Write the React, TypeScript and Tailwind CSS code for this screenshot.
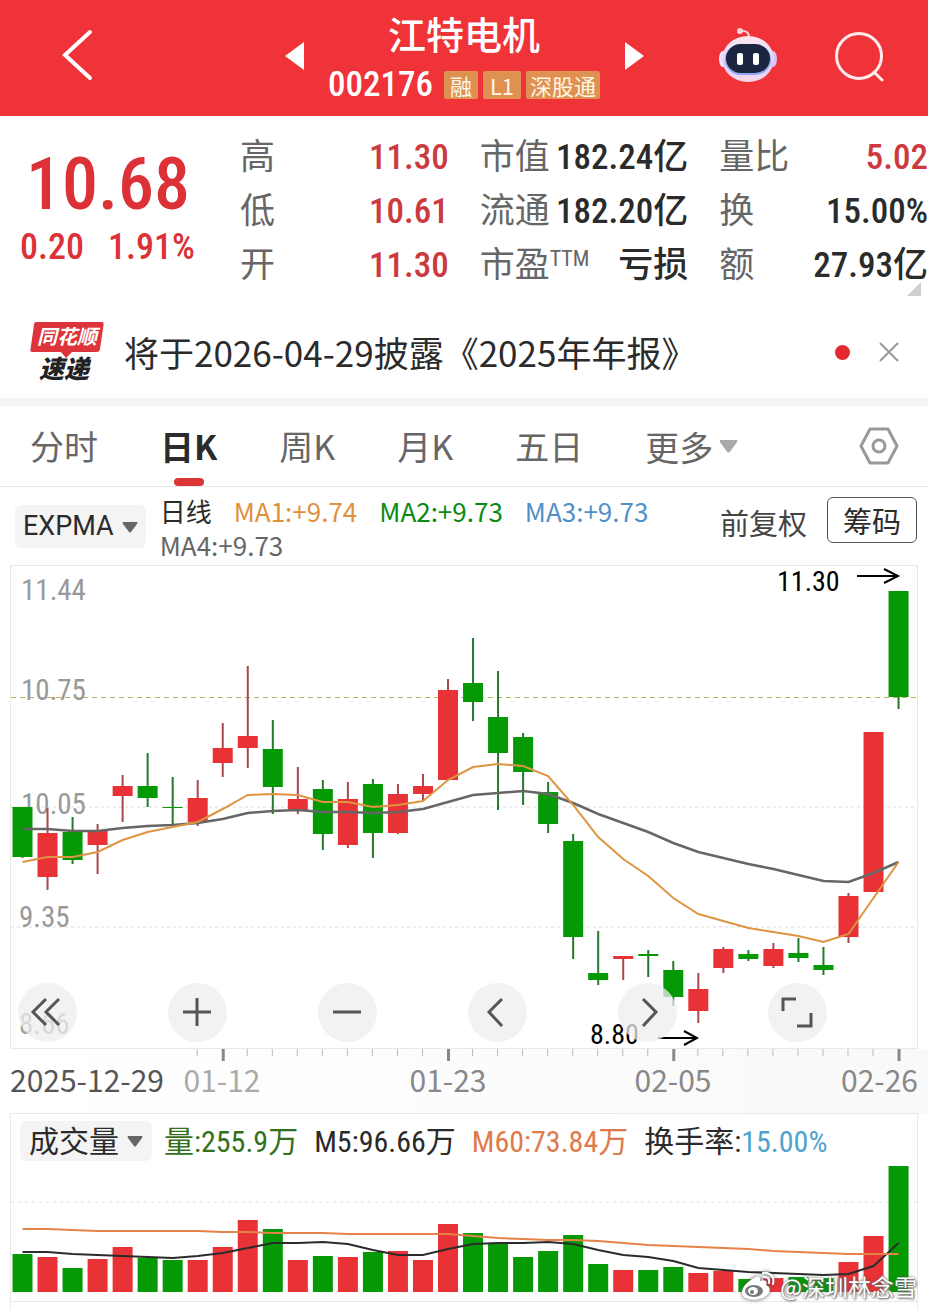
import { useState } from 'react'
import { clsx } from 'clsx'

// x step between two trading days
const STEP = 25.03
const FIRST_X = 22.5

const xOf = (i: number) => FIRST_X + STEP * i

// body top, body bottom, high, low, direction
type Candle = [number, number, number, number, 'up' | 'down']

const candles: Candle[] = [
  [807, 857, 807, 858, 'down'],
  [833, 877, 808, 890, 'up'],
  [832, 860, 817, 864, 'down'],
  [831, 845, 824, 874, 'up'],
  [786, 796, 775, 822, 'up'],
  [786, 798, 753, 807, 'down'],
  [807, 808, 777, 824, 'down'],
  [798, 822, 780, 826, 'up'],
  [748, 763, 723, 777, 'up'],
  [736, 748, 666, 768, 'up'],
  [749, 787, 720, 814, 'down'],
  [799, 810, 767, 814, 'up'],
  [789, 834, 780, 850, 'down'],
  [799, 845, 782, 848, 'up'],
  [784, 833, 779, 858, 'down'],
  [794, 833, 784, 834, 'up'],
  [786, 794, 774, 800, 'up'],
  [690, 780, 679, 780, 'up'],
  [683, 702, 638, 721, 'down'],
  [717, 753, 671, 810, 'down'],
  [737, 772, 733, 805, 'down'],
  [792, 824, 782, 833, 'down'],
  [841, 937, 834, 959, 'down'],
  [973, 980, 931, 985, 'down'],
  [956, 959, 956, 980, 'up'],
  [954, 956, 950, 977, 'down'],
  [970, 997, 961, 1006, 'down'],
  [989, 1011, 973, 1023, 'up'],
  [949, 968, 947, 973, 'up'],
  [954, 959, 950, 961, 'down'],
  [949, 966, 943, 968, 'up'],
  [953, 958, 938, 962, 'down'],
  [965, 970, 947, 975, 'down'],
  [896, 937, 893, 943, 'up'],
  [732, 892, 732, 892, 'up'],
  [591, 697, 591, 709, 'down'],
]

const fastLine = [
  862, 857, 857, 852, 840, 832, 827, 822, 809, 795, 794, 795, 802, 802, 807, 805, 801, 780,
  767, 764, 766, 776, 805, 837, 859, 876, 898, 914, 921, 928, 932, 936, 942, 934, 898, 862,
]
const slowLine = [
  829, 829, 831, 831, 828, 826, 825, 823, 819, 813, 811, 810, 812, 812, 813, 812, 809, 802,
  795, 793, 791, 794, 803, 814, 823, 832, 843, 852, 858, 864, 869, 875, 881, 882, 873, 862,
]

const volumes = [
  1254, 1257, 1268, 1259, 1247, 1258, 1260, 1260, 1247, 1220, 1229, 1260, 1256, 1257, 1252,
  1251, 1260, 1224, 1233, 1244, 1257, 1251, 1235, 1264, 1270, 1270, 1267, 1273, 1271, 1279,
  1278, 1277, 1278, 1262, 1236, 1166,
]
const volumeM5 = [
  1252, 1252, 1254, 1255, 1256, 1257, 1258, 1256, 1253, 1248, 1243, 1243, 1242, 1244, 1250,
  1255, 1255, 1249, 1244, 1243, 1243, 1242, 1244, 1250, 1255, 1257, 1261, 1268, 1270, 1272,
  1273, 1274, 1275, 1274, 1266, 1243,
]
const volumeM60 = [
  1229, 1229, 1230, 1231, 1231, 1231, 1231, 1231, 1232, 1232, 1233, 1233, 1233, 1234, 1234,
  1234, 1234, 1234, 1236, 1238, 1239, 1240, 1240, 1241, 1243, 1245, 1246, 1247, 1248, 1249,
  1251, 1252, 1253, 1254, 1254, 1254,
]

const points = (ys: number[]) => ys.map((y, i) => `${xOf(i)},${y}`).join(' ')

const priceLabels = [
  { text: '11.44', x: 21, y: 600 },
  { text: '10.75', x: 21, y: 700 },
  { text: '10.05', x: 21, y: 814 },
  { text: '9.35', x: 19, y: 927 },
  { text: '8.66', x: 19, y: 1034 },
]

const stats = [
  [
    { label: '高', value: '11.30', red: true },
    { label: '低', value: '10.61', red: true },
    { label: '开', value: '11.30', red: true },
  ],
  [
    { label: '市值', value: '182.24亿' },
    { label: '流通', value: '182.20亿' },
    { label: '市盈', sup: 'TTM', value: '亏损' },
  ],
  [
    { label: '量比', value: '5.02', red: true },
    { label: '换', value: '15.00%' },
    { label: '额', value: '27.93亿' },
  ],
]

const tabs = ['分时', '日K', '周K', '月K', '五日']

const chartButtons = [
  { label: '最早', d: 'M28 16L15 29L28 42M41 16L28 29L41 42' },
  { label: '放大', d: 'M29 15V43M15 29H43' },
  { label: '缩小', d: 'M15 29H43' },
  { label: '左移', d: 'M34 16L21 29L34 43' },
  { label: '右移', d: 'M25 16L38 29L25 43' },
  { label: '全屏', d: 'M15 28V16H28M43 30V43H29' },
]

const Caret = ({ className }: { className?: string }) => (
  <svg viewBox="0 0 16 12" className={className} fill="currentColor" aria-hidden="true">
    <path d="M1 1H15Q16 1 15 3L9 11Q8 12 7 11L1 3Q0 1 1 1Z" />
  </svg>
)

const Robot = () => (
  <svg viewBox="0 0 60 56" className="h-14 w-[60px]" aria-hidden="true">
    <defs>
      <linearGradient id="shell" x1="0" y1="0" x2="0" y2="1">
        <stop offset="0" stopColor="#ffe9f0" />
        <stop offset="0.6" stopColor="#d9d0fa" />
        <stop offset="1" stopColor="#f7d9ea" />
      </linearGradient>
    </defs>
    <path d="M22 3Q31 2 31 9" fill="none" stroke="#ffd3dc" strokeWidth="2" />
    <circle cx="22" cy="3" r="3" fill="#ffd3dc" />
    <ellipse cx="5" cy="31" rx="4" ry="8" fill="#f3e4fb" />
    <ellipse cx="55" cy="31" rx="4" ry="8" fill="#d5c3f6" />
    <ellipse cx="30" cy="31" rx="26" ry="23" fill="url(#shell)" />
    <rect x="7" y="16" width="46" height="31" rx="16" fill="#8fa5ef" />
    <rect x="8" y="16" width="44" height="29" rx="15" fill="#1b2540" />
    <rect x="19" y="25" width="6" height="12" rx="2" fill="#fff" />
    <rect x="35" y="25" width="6" height="12" rx="2" fill="#fff" />
  </svg>
)

const Header = () => (
  <header className="grid h-[116px] grid-cols-[1fr_359px_1fr] items-center bg-[#f03239] pb-1 text-white">
    <div className="pl-[60px]">
      <button type="button" aria-label="返回" className="block">
        <svg viewBox="0 0 34 54" className="h-[54px] w-[34px]" fill="none" stroke="currentColor" strokeWidth="4" strokeLinecap="round">
          <path d="M30 3L5 26L30 49" />
        </svg>
      </button>
    </div>
    <div className="flex items-center justify-between">
      <button type="button" aria-label="上一只">
        <svg viewBox="0 0 20 28" className="h-7 w-5" fill="currentColor"><path d="M19 0V28L0 14Z" /></svg>
      </button>
      <div className="flex flex-col items-center pt-1">
        <h1 className="text-[38px] leading-[48px] font-medium">江特电机</h1>
        <div className="flex items-center gap-[5px] pt-[6px]">
          <span className="pr-[6px] font-['Roboto_Condensed','Roboto',sans-serif] text-[35px] leading-[44px] font-medium">002176</span>
          <span className="rounded-xs bg-[#de9150] px-[6px] text-[22px] leading-7 text-[#fff6e6]">融</span>
          <span className="rounded-xs bg-[#de9150] px-[7px] text-[22px] leading-7 text-[#fff6e6]">L1</span>
          <span className="rounded-xs bg-[#de9150] px-1 text-[22px] leading-7 text-[#fff6e6]">深股通</span>
        </div>
      </div>
      <button type="button" aria-label="下一只">
        <svg viewBox="0 0 20 28" className="h-7 w-5" fill="currentColor"><path d="M1 0V28L20 14Z" /></svg>
      </button>
    </div>
    <div className="flex items-center justify-end gap-14 pr-[42px]">
      <button type="button" aria-label="智能助手"><Robot /></button>
      <button type="button" aria-label="搜索">
        <svg viewBox="0 0 52 52" className="size-[52px]" fill="none" stroke="#ffeceb" strokeWidth="3" strokeLinecap="round">
          <circle cx="25" cy="26" r="22.5" />
          <path d="M40 42L48 50" />
        </svg>
      </button>
    </div>
  </header>
)

const Quote = () => (
  <section className="relative flex pt-[15px] pb-[13px] font-['Roboto_Condensed','Roboto','Noto_Sans_CJK_SC',sans-serif]">
    <div className="flex w-[240px] flex-col pt-[18px] text-[#dc3237]">
      <div className="pl-[26px] text-[72px] leading-[72px] font-medium">10.68</div>
      <div className="flex gap-6 pt-1 pl-5 text-[36px] leading-[44px] font-medium">
        <span>0.20</span>
        <span>1.91%</span>
      </div>
    </div>
    <div className="grid flex-1 grid-cols-3 gap-x-[31px]">
      {stats.map((column, i) => (
        <dl key={i}>
          {column.map((item) => (
            <div key={item.label} className="flex h-[54px] items-center justify-between whitespace-nowrap">
              <dt className="flex text-[35px] leading-[54px] text-[#666]">
                {item.label}
                {'sup' in item && <span className="text-[22px] leading-10">{item.sup}</span>}
              </dt>
              <dd className={clsx('text-[35px] leading-[54px] font-medium', 'red' in item ? 'text-[#cc3a3f]' : 'text-[#2b2b2b]')}>
                {item.value}
              </dd>
            </div>
          ))}
        </dl>
      ))}
    </div>
    <svg viewBox="0 0 14 14" className="absolute right-[7px] bottom-[10px] size-[14px]" fill="#cfcfcf"><path d="M14 0V14H0Z" /></svg>
  </section>
)

const Notice = () => (
  <section className="flex h-[92px] items-center pr-[28px] pl-[30px]">
    <svg viewBox="0 0 74 66" className="h-[66px] w-[74px]" aria-label="同花顺速递">
      <path d="M6 3H72Q74 3 73.500 6L70 30Q69.500 33 67 33H42L36 39L31 33H2Q0 33 0.500 30L4 6Q4 3 6 3Z" fill="#dc343a" />
      <text x="7" y="25" fontSize="20" fontWeight="700" fontStyle="italic" fill="#fff">同花顺</text>
      <text x="9" y="59" fontSize="25" fontWeight="900" fontStyle="italic" fill="#222">速递</text>
    </svg>
    <a href="#report" className="ml-5 flex-1 text-[35px] leading-[48px] whitespace-nowrap text-[#2b2b2b]">
      将于2026-04-29披露《2025年年报》
    </a>
    <span className="mr-7 size-[15px] rounded-full bg-[#e5282f]" />
    <button type="button" aria-label="关闭">
      <svg viewBox="0 0 22 22" className="size-[22px]" fill="none" stroke="#999" strokeWidth="2"><path d="M2 2L20 20M20 2L2 20" /></svg>
    </button>
  </section>
)

const Tabs = () => {
  const [active, setActive] = useState('日K')

  return (
    <nav className="flex h-[89px] items-center border-t-8 border-b border-t-[#f4f4f4] border-b-[#e6e6e6] pr-[29px] pl-[30px] text-[34px] text-[#666]">
      <div className="flex h-full flex-1 items-center gap-[62px]">
        {tabs.map((tab) => (
          <button
            key={tab}
            type="button"
            onClick={() => setActive(tab)}
            className={clsx('relative h-full leading-[80px] whitespace-nowrap', active === tab && 'font-bold text-[#2b2b2b]')}
          >
            {tab}
            {active === tab && <span className="absolute bottom-0 left-1/2 h-2 w-[30px] -translate-x-1/2 rounded-sm bg-[#dc3535]" />}
          </button>
        ))}
        <button type="button" className="flex items-center gap-[6px] whitespace-nowrap">
          更多
          <Caret className="h-4 w-[19px] text-[#aaa]" />
        </button>
      </div>
      <button type="button" aria-label="设置">
        <svg viewBox="0 0 40 40" className="size-10" fill="none" stroke="#999" strokeWidth="3" strokeLinejoin="round">
          <path d="M11 3H29L38 20L29 37H11L2 20Z" />
          <circle cx="20" cy="20" r="6" />
        </svg>
      </button>
    </nav>
  )
}

const Indicators = () => (
  <div className="flex h-[78px] items-start pr-[11px] pl-[15px]">
    <button type="button" className="mt-[18px] flex h-[43px] items-center gap-2 rounded-md bg-[#f4f4f4] px-2 font-['Roboto'] text-[27px] text-[#2b2b2b]">
      EXPMA
      <Caret className="h-3 w-4 text-[#666]" />
    </button>
    <div className="flex flex-1 flex-wrap gap-x-[22px] pt-[7px] pl-[14px] text-[26px] leading-[34px]">
      <span className="text-[#2b2b2b]">日线</span>
      <span className="text-[#e28f3c]">MA1:+9.74</span>
      <span className="text-[#0a8a12]">MA2:+9.73</span>
      <span className="text-[#5090c8]">MA3:+9.73</span>
      <span className="text-[#666]">MA4:+9.73</span>
    </div>
    <button type="button" className="mt-[13px] mr-5 text-[29px] leading-[44px] text-[#444]">前复权</button>
    <button type="button" className="mt-[10px] rounded-md border border-[#555] px-[15px] text-[29px] leading-[44px] text-[#2b2b2b]">筹码</button>
  </div>
)

const PriceChart = () => (
  <div className="relative mx-[10px] border border-[#e9e9e9]">
    <svg viewBox="11 566 906 482" className="block w-full font-['Roboto_Condensed','Roboto',sans-serif]" role="img" aria-label="日K线">
      <path d="M11 807H917M11 927H917" stroke="#dcdcdc" strokeDasharray="3 3" />
      <path d="M11 697.500H917" stroke="#b9b060" strokeDasharray="5 4" />
      {priceLabels.map((label) => (
        <text key={label.text} x={label.x} y={label.y} fontSize="29" fill="#999">{label.text}</text>
      ))}
      {candles.map(([top, bottom, high, low, dir], i) => (
        <g key={i} fill={dir === 'up' ? '#e93236' : '#059905'}>
          <rect x={xOf(i) - 1} y={high} width="2" height={low - high} fill={dir === 'up' ? '#a8484c' : '#257a2a'} />
          <rect x={xOf(i) - 10} y={top} width="20" height={bottom - top} />
        </g>
      ))}
      <polyline points={points(slowLine)} fill="none" stroke="#666" strokeWidth="2.500" />
      <polyline points={points(fastLine)} fill="none" stroke="#de9440" strokeWidth="2" />
      <g fill="none" stroke="#000" strokeWidth="2">
        <path d="M857 576H898M884 569L898 576L884 583" />
        <path d="M658 1038H697M684 1031L697 1038L684 1045" />
      </g>
      <text x="777" y="591" fontSize="28">11.30</text>
      <text x="590" y="1044" fontSize="28">8.80</text>
    </svg>
    <div className="absolute inset-x-0 bottom-[6px] flex justify-between pr-[90px] pl-[7px]">
      {chartButtons.map((button) => (
        <button key={button.label} type="button" aria-label={button.label} className="size-[59px] rounded-full bg-[#eeeeee]/75">
          <svg viewBox="0 0 59 59" className="size-full" fill="none" stroke="#555" strokeWidth="3"><path d={button.d} /></svg>
        </button>
      ))}
    </div>
  </div>
)

const DateAxis = () => (
  <svg viewBox="0 1049 928 64" className="block w-full bg-linear-to-r from-white to-[#f9f9f9]">
    {candles.map((_, i) => {
      if (i < 7) return null
      const major = i % 9 === 8
      return <rect key={i} x={xOf(i) - 1} y="1049" width={major ? 3 : 1} height={major ? 12 : 7} fill={major ? '#888' : '#bbb'} />
    })}
    <g fontSize="30" fill="#888">
      <text x="10" y="1092" fill="#555">2025-12-29</text>
      <text x="222" y="1092" textAnchor="middle" fill="#aaa">01-12</text>
      <text x="448" y="1092" textAnchor="middle">01-23</text>
      <text x="673" y="1092" textAnchor="middle">02-05</text>
      <text x="918" y="1092" textAnchor="end">02-26</text>
    </g>
  </svg>
)

const VolumeChart = () => (
  <section className="relative mx-[10px] border border-[#e9e9e9]">
    <div className="flex h-[50px] items-center gap-4 pt-1 pl-[9px] font-['Roboto_Condensed','Roboto','Noto_Sans_CJK_SC',sans-serif] text-[30px] whitespace-nowrap text-[#2b2b2b]">
      <button type="button" className="-mr-1 flex h-10 items-center gap-2 rounded-md bg-[#f4f4f4] px-[9px]">
        成交量
        <Caret className="h-3 w-4 text-[#666]" />
      </button>
      <span className="text-[#35701c]">量:255.9万</span>
      <span>M5:96.66万</span>
      <span className="text-[#e07a4a]">M60:73.84万</span>
      <span>换手率:<span className="text-[#4fa3cc]">15.00%</span></span>
    </div>
    <svg viewBox="11 1164 906 137" className="block w-full" role="img" aria-label="成交量">
      <path d="M11 1202H917" stroke="#e0e0e0" strokeDasharray="3 4" />
      {volumes.map((top, i) => (
        <rect key={i} x={xOf(i) - 10} y={top} width="20" height={1292 - top} fill={candles[i][4] === 'up' ? '#e93236' : '#059905'} />
      ))}
      <polyline points={points(volumeM5)} fill="none" stroke="#2b2b2b" strokeWidth="2" />
      <polyline points={points(volumeM60)} fill="none" stroke="#e5824a" strokeWidth="2" />
    </svg>
    <div className="absolute right-0 bottom-0 flex items-center gap-1 text-[23px] leading-7 text-white [text-shadow:0_0_3px_#555,1px_1px_2px_#777]">
      <svg viewBox="0 0 36 30" className="h-[30px] w-9 drop-shadow-[0_0_2px_#555]" fill="#fff">
        <path d="M14 7C18 4 21 6 20 10C25 8 28 10 26 14C31 16 31 21 26 25C20 30 7 30 3 25C-1 20 6 11 14 7Z" />
        <ellipse cx="14" cy="20" rx="9" ry="6" fill="#777" />
        <ellipse cx="13" cy="20" rx="5" ry="4" fill="#fff" />
        <circle cx="12" cy="21" r="2" fill="#777" />
        <path d="M23 2C30 1 35 6 33 13M24 6C28 6 30 8 29 12" fill="none" stroke="#fff" strokeWidth="2" strokeLinecap="round" />
      </svg>
      @深圳林念雪
    </div>
  </section>
)

const App = () => {
  return (
    <main className="min-h-screen overflow-hidden bg-white font-['Noto_Sans_CJK_SC',sans-serif]">
      <Header />
      <Quote />
      <Notice />
      <Tabs />
      <Indicators />
      <PriceChart />
      <DateAxis />
      <VolumeChart />
      <div className="mx-[10px] h-2 border-x border-[#e9e9e9]" />
    </main>
  )
}

export default App
